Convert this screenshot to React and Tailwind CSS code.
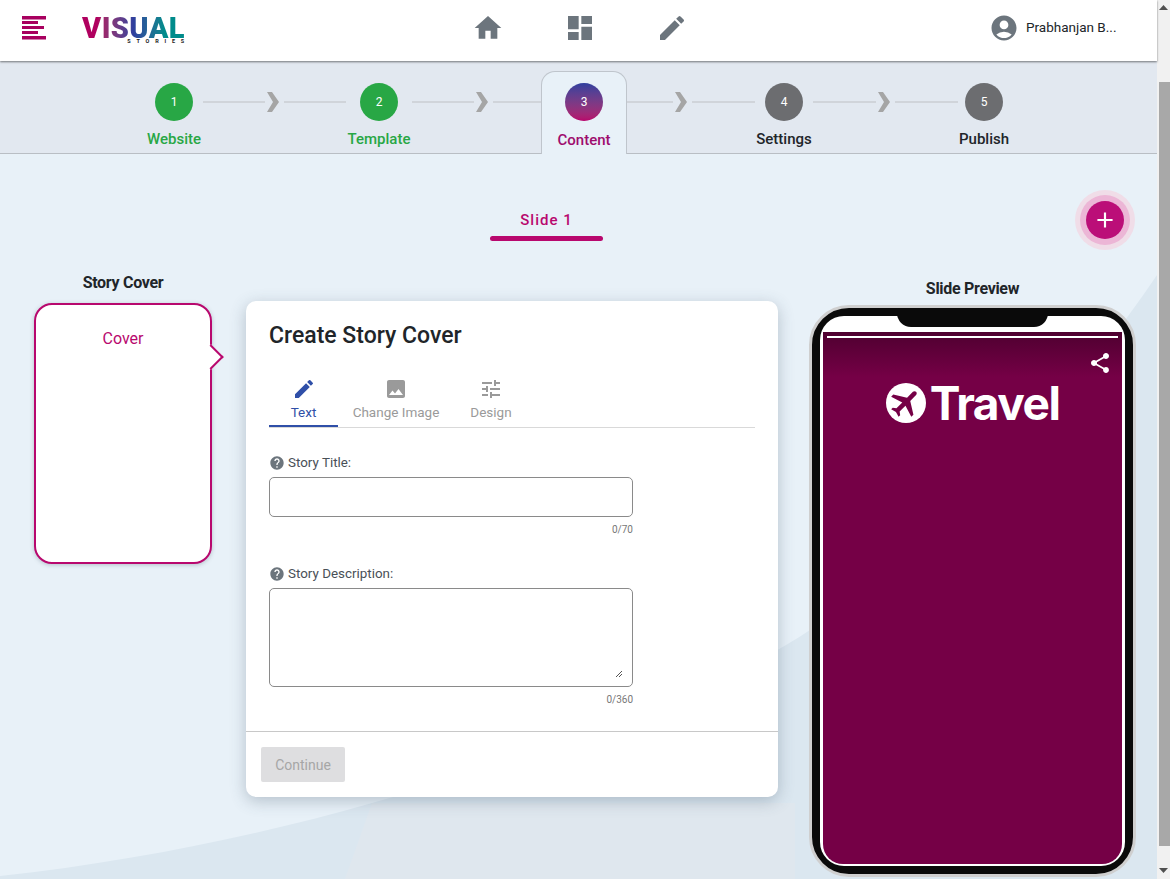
import { MdHome, MdDashboard, MdEdit, MdAccountCircle, MdHelp, MdImage, MdTune, MdShare, MdAdd } from "react-icons/md";

const FONT = "font-['Roboto',sans-serif]";

function MenuIcon() {
  return (
    <svg width="24" height="24" viewBox="0 0 24 24" fill="#a8005f">
      <rect x="0" y="0" width="24" height="3.5" />
      <rect x="0" y="5" width="16" height="3" />
      <rect x="0" y="10" width="22" height="3" />
      <rect x="0" y="15" width="16" height="3" />
      <rect x="0" y="20" width="24" height="3.5" />
    </svg>
  );
}

function Logo() {
  return (
    <div className="flex flex-col items-end w-[103px]">
      <span className="text-[29px] leading-[22px] font-black tracking-[0.4px] bg-gradient-to-r from-[#b0005f] from-15% via-[#2f3f9e] via-50% to-[#008b8b] to-80% bg-clip-text text-transparent">
        VISUAL
      </span>
      <span className="text-[5.5px] leading-[5px] font-bold tracking-[5.8px] mr-[-5px] text-[#222]">STORIES</span>
    </div>
  );
}

function Chevron() {
  return (
    <svg width="12" height="20" viewBox="0 0 12 20" fill="#a5a5a5" className="shrink-0 ml-[2px] mr-[5px]">
      <polygon points="0,0 5,0 12,10 5,20 0,20 6,10" />
    </svg>
  );
}

function Connector({ className, lineClass }) {
  return (
    <div className={`flex items-center h-[38px] ${className}`}>
      <div className={`h-[2px] bg-[#d0d4da] ${lineClass}`} />
      <Chevron />
      <div className="flex-1 h-[2px] bg-[#d0d4da]" />
    </div>
  );
}

function Step({ n, label, done, className = "" }) {
  return (
    <div className={`flex flex-col items-center ${className}`}>
      <div className={`w-[38px] h-[38px] rounded-full flex items-center justify-center text-xs text-white ${done ? "bg-[#28a745]" : "bg-[#6c6d70]"}`}>
        {n}
      </div>
      <div className={`mt-[8px] text-[15px] leading-5 font-medium whitespace-nowrap ${done ? "text-[#28a745]" : "text-[#212529]"}`}>
        {label}
      </div>
    </div>
  );
}

function Stepper() {
  return (
    <div className="h-[93px] bg-[#e2e8f0] border-b border-[#b9bec4] pl-[145px] pt-[22px] flex items-start shrink-0">
      <Step n="1" label="Website" done className="w-[58px]" />
      <Connector className="w-[147px] pr-[4px]" lineClass="w-[62px]" />
      <Step n="2" label="Template" done className="w-[58px]" />
      <Connector className="w-[133px] pl-[4px]" lineClass="w-[62px]" />
      <div className="w-[86px] h-[83px] -mt-[12px] bg-[#e8f1f8] border border-b-0 border-[#bfc5cc] rounded-t-[14px] flex flex-col items-center pt-[11px] shrink-0">
        <div className="w-[38px] h-[38px] rounded-full bg-gradient-to-b from-[#2f3f9e] to-[#b8006c] flex items-center justify-center text-xs text-white">3</div>
        <div className="mt-[9px] text-[15px] leading-5 font-medium text-[#9e0c6e]">Content</div>
      </div>
      <Connector className="w-[128px]" lineClass="w-[46px]" />
      <Step n="4" label="Settings" className="w-[58px]" />
      <Connector className="w-[152px] pr-[7px]" lineClass="w-[63px]" />
      <Step n="5" label="Publish" className="w-[38px]" />
    </div>
  );
}

function Header() {
  return (
    <header className="h-[61px] bg-white shadow-[0_1px_2px_rgba(0,0,0,0.5)] relative z-10 flex items-center pl-[22px] pb-[6px] shrink-0">
      <MenuIcon />
      <div className="ml-[36px] mt-[6px]"><Logo /></div>
      <div className="flex items-center ml-[287px] gap-[60px] text-[#6c757d]">
        <MdHome size={32} />
        <MdDashboard size={32} />
        <MdEdit size={32} />
      </div>
      <div className="flex items-center ml-[301px] gap-[7px]">
        <MdAccountCircle size={30} className="text-[#6c757d]" />
        <span className="text-[13.5px] text-[#212529]">Prabhanjan B...</span>
      </div>
    </header>
  );
}

function Field({ label, children, count }) {
  return (
    <div>
      <div className="flex items-center gap-[3px] h-5 text-[13.4px] text-[#495057]">
        <MdHelp size={16} className="text-[#6c757d]" />
        {label}
      </div>
      <div className="w-[364px] mt-[4px]">
        {children}
        <div className="text-[10px] leading-3 mt-[7px] text-right text-[#777]">{count}</div>
      </div>
    </div>
  );
}

function TabItem({ icon: Icon, label, active, className = "" }) {
  return (
    <div className={`h-[50px] flex flex-col items-center ${active ? "border-b-2 border-[#2f4fa8] text-[#2f4fa8]" : "text-[#9a9a9a]"} ${className}`}>
      <Icon size={24} />
      <span className="text-[13.5px] leading-5 mt-[1px] whitespace-nowrap">{label}</span>
    </div>
  );
}

function StoryCard() {
  return (
    <div className="w-[532px] h-[496px] bg-white rounded-[10px] shadow-[0_4px_16px_rgba(60,80,100,0.3)] flex flex-col shrink-0">
      <div className="px-[23px] pt-[20px] flex-1">
        <h2 className="text-[23px] leading-[30px] font-medium text-[#212529]">Create Story Cover</h2>
        <div className="flex mt-[26px] border-b border-[#d9d9d9]">
          <TabItem icon={MdEdit} label="Text" active className="w-[69px]" />
          <TabItem icon={MdImage} label="Change Image" className="w-[116px]" />
          <TabItem icon={MdTune} label="Design" className="w-[74px]" />
        </div>
        <div className="mt-[25px]">
          <Field label="Story Title:" count="0/70">
            <div className="h-[40px] border border-[#8a8a8a] rounded-[5px] bg-white" />
          </Field>
        </div>
        <div className="mt-[28px]">
          <Field label="Story Description:" count="0/360">
            <div className="h-[99px] border border-[#8a8a8a] rounded-[5px] bg-white relative">
              <svg width="8" height="8" viewBox="0 0 8 8" stroke="#555" className="absolute right-[9px] bottom-[8px]">
                <path d="M1 7 L7 1 M4 7 L7 4" />
              </svg>
            </div>
          </Field>
        </div>
      </div>
      <div className="h-[66px] border-t border-[#c8c8c8] pl-[15px] pt-[15px] shrink-0">
        <div className="w-[84px] h-[35px] bg-[#dedee0] rounded-[2px] flex items-center justify-center text-sm text-[#a6a6a6]">Continue</div>
      </div>
    </div>
  );
}

function Phone() {
  return (
    <div className="w-[327px] h-[572px] rounded-[40px] bg-[#0a0a0a] border-[3px] border-[#cfcfcf] p-[8px] relative shrink-0">
      <div className="absolute top-0 left-[85px] w-[151px] h-[19px] bg-[#0a0a0a] rounded-b-[14px]" />
      <div className="h-full bg-white rounded-[24px] pt-[16px] px-[3px] pb-[2px]">
        <div className="h-full rounded-b-[20px] bg-[#750046] bg-[linear-gradient(#4f0030,#750046_45px)] pt-[4px] flex flex-col">
          <div className="h-[2px] mx-[4px] bg-white" />
          <div className="flex justify-end pr-[10px] pt-[13px] text-white"><MdShare size={24} /></div>
          <div className="flex items-center justify-center gap-[4px] mt-[5px] text-white">
            <svg width="40" height="40" viewBox="0 0 40 40">
              <circle cx="20" cy="20" r="20" fill="#fff" />
              <g transform="rotate(45 20 20) translate(2 2) scale(1.5)">
                <path fill="#750046" d="M21 16v-2l-8-5V3.5c0-.83-.67-1.5-1.5-1.5S10 2.67 10 3.5V9l-8 5v2l8-2.5V19l-2 1.5V22l3.5-1 3.5 1v-1.5L13 19v-5.5l8 2.5z" />
              </g>
            </svg>
            <span className="font-['Inter',sans-serif] text-[46px] leading-[46px] font-bold tracking-[-1.5px]">Travel</span>
          </div>
        </div>
      </div>
    </div>
  );
}

function Scrollbar() {
  return (
    <div className="w-[13px] h-full bg-[#f1f1f1] flex flex-col items-center shrink-0">
      <svg width="9" height="6" viewBox="0 0 9 6" fill="#505050" className="mt-[5px]"><polygon points="4.5,0 9,5 0,5" /></svg>
      <div className="w-[11px] h-[764px] bg-[#a8a8a8] mt-[71px] self-end" />
      <svg width="9" height="6" viewBox="0 0 9 6" fill="#505050" className="mt-[22px]"><polygon points="0,0 9,0 4.5,5" /></svg>
    </div>
  );
}

export default function App() {
  return (
    <div className={`h-[879px] flex overflow-hidden bg-[#e8f1f8] ${FONT}`}>
      <main className="relative flex-1 flex flex-col min-w-0">
        {/* background waves */}
        <svg className="absolute inset-0 w-full h-full" viewBox="0 0 1157 879" preserveAspectRatio="none">
          <path d="M0 876 C 130 862, 260 835, 372 803 C 560 750, 720 690, 810 630 C 950 530, 1080 390, 1157 275 L1157 879 L0 879 Z" fill="#dbe7f0" />
          <path d="M345 879 L372 803 L795 803 L795 879 Z" fill="#dfe7ee" />
        </svg>
        <Header />
        <div className="relative"><Stepper /></div>
        <div className="relative flex items-center h-[31px] mt-[56px] shrink-0">
          <div className="ml-[490px] w-[113px] text-center">
            <div className="text-[15px] leading-5 font-medium tracking-[1px] text-[#b8086e]">Slide 1</div>
            <div className="h-[5px] mt-[6px] rounded-full bg-[#b8086e]" />
          </div>
          <div className="ml-[472px] mb-[12px] w-[60px] h-[60px] rounded-full bg-[#f0dde8] flex items-center justify-center shrink-0">
            <div className="w-[50px] h-[50px] rounded-full bg-[#ecb6d6] flex items-center justify-center">
              <div className="w-[38px] h-[38px] rounded-full bg-[#bb0e78] flex items-center justify-center text-white"><MdAdd size={26} /></div>
            </div>
          </div>
        </div>
        <div className="relative flex items-start pl-[34px] mt-[32px]">
          <div className="w-[178px] shrink-0">
            <div className="text-base leading-5 font-bold text-center text-[#212529] tracking-[-0.3px]">Story Cover</div>
            <div className="relative h-[261px] mt-[10px] bg-white border-2 border-[#b8086e] rounded-[18px] text-center pt-[24px] text-base leading-5 text-[#b8086e] shadow-[0_1px_4px_rgba(60,80,100,0.3)]">
              Cover
              <div className="absolute right-[-10px] top-[43px] w-[18px] h-[18px] rotate-45 bg-white border-t-2 border-r-2 border-[#b8086e]" />
            </div>
          </div>
          <div className="ml-[34px] mt-[28px]"><StoryCard /></div>
          <div className="ml-[31px] mt-[6px] flex flex-col items-center">
            <div className="text-base leading-5 font-bold text-[#212529] tracking-[-0.3px] mb-[6px]">Slide Preview</div>
            <Phone />
          </div>
        </div>
      </main>
      <Scrollbar />
    </div>
  );
}
